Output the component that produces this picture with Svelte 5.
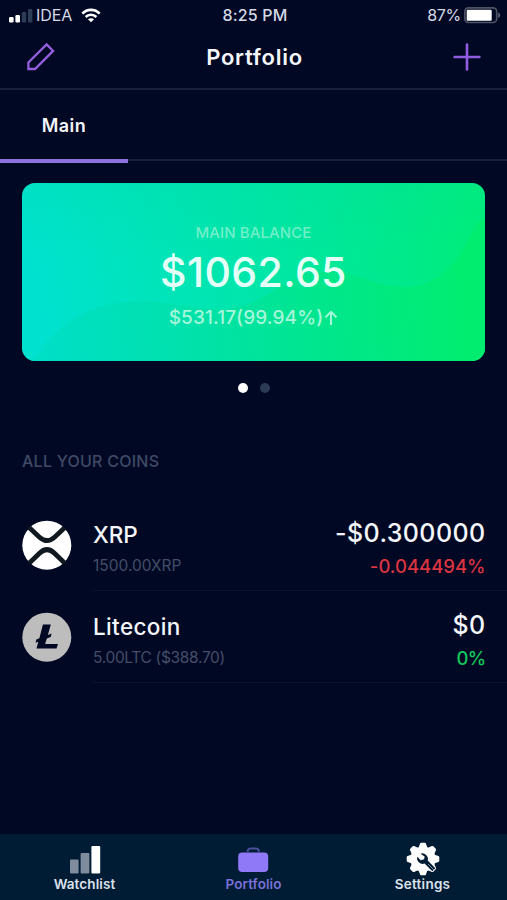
<script>
  const coins = [
    { id: 'xrp', name: 'XRP', held: '1500.00XRP', value: '-$0.300000', change: '-0.044494%', tone: 'down' },
    { id: 'ltc', name: 'Litecoin', held: '5.00LTC ($388.70)', value: '$0', change: '0%', tone: 'flat' }
  ];
</script>

<div class="screen">
  <div class="status">
    <div class="carrier">
      <svg width="24" height="15" viewBox="0 0 24 15">
        <rect x="0" y="9" width="4.6" height="5.5" rx="1.2" fill="#fff" />
        <rect x="6.4" y="7" width="4.6" height="7.5" rx="1.2" fill="#fff" />
        <rect x="12.8" y="4" width="4.4" height="10.5" rx="1.2" fill="#2c3c55" />
        <rect x="19" y="1" width="4.4" height="13.5" rx="1.2" fill="#2c3c55" />
      </svg>
      <span class="network">IDEA</span>
      <svg class="wifi" width="20" height="15" viewBox="0 0 20 15" fill="none" stroke="#fff" stroke-width="2.6">
        <path d="M1.3 5.7C6 .6 14 .6 18.7 5.7" />
        <path d="M4.6 9C7.6 6 12.4 6 15.4 9" />
        <path d="M10 14.3 6.9 11.2C8.6 9.8 11.4 9.8 13.1 11.2Z" fill="#fff" stroke="none" />
      </svg>
    </div>
    <span class="time">8:25 PM</span>
    <div class="power">
      <span>87%</span>
      <svg width="37" height="17" viewBox="0 0 37 17">
        <rect x=".9" y=".9" width="31.8" height="14.6" rx="3.6" fill="#000824" stroke="#4d5365" stroke-width="1.7" />
        <rect x="2.7" y="2.8" width="25" height="11" rx="1.2" fill="#fff" />
        <path d="M34.4 5.5C36.5 6.3 36.5 10.2 34.4 11Z" fill="#6b7185" />
      </svg>
    </div>
  </div>

  <header>
    <svg width="30" height="30" viewBox="0 0 30 30" fill="none" stroke="#945fdd" stroke-width="2.3">
      <path d="M20.6 2.4 27.1 8.9 9 27H2.4V20.4Z" />
    </svg>
    <h1>Portfolio</h1>
    <svg width="28" height="28" viewBox="0 0 28 28" stroke="#8f5ce2" stroke-width="2.6" stroke-linecap="round">
      <path d="M14 1.6V26.4M1.6 14H26.4" />
    </svg>
  </header>

  <nav class="lists"><span class="active">Main</span></nav>

  <section class="card">
    <svg class="waves" width="463" height="178" viewBox="0 0 463 178" preserveAspectRatio="none">
      <defs>
        <linearGradient id="sea" gradientUnits="userSpaceOnUse" x1="20" y1="130" x2="450" y2="30">
          <stop offset="0" stop-color="#00e2cf" />
          <stop offset=".5" stop-color="#00e6a8" />
          <stop offset=".85" stop-color="#00ea88" />
          <stop offset="1" stop-color="#00ee78" />
        </linearGradient>
        <linearGradient id="mid" gradientUnits="userSpaceOnUse" x1="10" y1="130" x2="440" y2="90">
          <stop offset="0" stop-color="#00dfc8" />
          <stop offset=".35" stop-color="#00e1ac" />
          <stop offset=".65" stop-color="#00e68e" />
          <stop offset="1" stop-color="#00ed70" />
        </linearGradient>
        <linearGradient id="top" x1="0" y1="0" x2="0" y2="1">
          <stop offset="0" stop-color="#00d8a8" stop-opacity=".22" />
          <stop offset="1" stop-color="#00d8a8" stop-opacity="0" />
        </linearGradient>
      </defs>
      <rect width="463" height="178" fill="url(#sea)" />
      <rect width="463" height="75" fill="url(#top)" />
      <path d="M8 178C38 140 65 119 119 118C165 120 190 132 222 123C260 108 270 88 307 88C335 88 350 104 385 104C425 102 441 68 451 48C455 40 459 37 463 35V178Z" fill="url(#mid)" />
    </svg>
    <div class="summary">
      <span class="caption">MAIN BALANCE</span>
      <strong>$1062.65</strong>
      <span class="gain">$531.17(99.94%)<svg width="14" height="16" viewBox="0 0 14 16" fill="none" stroke="currentColor" stroke-width="2"><path d="M7 15V2M1.5 7.3 7 1.8 12.5 7.3" /></svg></span>
    </div>
  </section>

  <div class="dots"><i class="on"></i><i></i></div>

  <h2>ALL YOUR COINS</h2>

  <ul>
    {#each coins as coin (coin.id)}
      <li>
        <svg class="logo" width="50" height="50" viewBox="0 0 50 50">
          {#if coin.id === 'xrp'}
            <circle cx="24.8" cy="25.2" r="24.5" fill="#fff" />
            <g fill="none" stroke="#101820" stroke-width="4.8">
              <path d="M7.4 7.8 17.5 17.2Q25 24 32.5 17.2L42.6 7.8" />
              <path d="M7.4 43 17.5 33.3Q25 26 32.5 33.3L42.6 43" />
            </g>
          {:else}
            <circle cx="24.8" cy="25.2" r="24.5" fill="#bdbdbd" />
            <path d="M20.9 12.4H28.8L25.9 23 29.6 21.5 28.7 25 24.8 26.6 23.1 31.9H36L34.5 36.4H14.5L16.3 29.7 13.5 30.8 14.4 27.5 17.4 26.2Z" fill="#000824" />
          {/if}
        </svg>
        <div class="row">
          <div class="asset">
            <span class="name {coin.id}">{coin.name}</span>
            <span class="held {coin.id}">{coin.held}</span>
          </div>
          <div class="worth">
            <span class="value">{coin.value}</span>
            <span class="change {coin.tone}">{coin.change}</span>
          </div>
        </div>
      </li>
    {/each}
  </ul>

  <footer>
    <div class="tab">
      <svg width="34" height="32" viewBox="0 0 34 32">
        <rect x="2" y="17.5" width="8.6" height="14" rx="1" fill="#7f8c9d" />
        <rect x="12.6" y="10.9" width="8.8" height="20.6" rx="1" fill="#7f8c9d" />
        <rect x="23.4" y="4" width="8.8" height="27.5" rx="1" fill="#fff" />
      </svg>
      <span>Watchlist</span>
    </div>
    <div class="tab current">
      <svg width="34" height="32" viewBox="0 0 34 32">
        <path d="M10.7 9.8V8.8Q11.2 6.6 14 6.6H18.6Q21.3 6.6 21.8 8.8V9.8" fill="none" stroke="#4c519d" stroke-width="2" />
        <rect x="1.200" y="10.600" width="30" height="19.400" rx="4" fill="#9079f7" />
      </svg>
      <span>Portfolio</span>
    </div>
    <div class="tab">
      <svg class="gear" width="34" height="34" viewBox="-17 -17 34 34">
        <circle r="12.600" fill="#fff" />
        {#each [0, 45, 90, 135, 180, 225, 270, 315] as angle}
          <path d="M-4.500 -11 -2.900 -15.400Q-2.600 -16.300 -1.700 -16.300H1.700Q2.600 -16.300 2.900 -15.400L4.500 -11Z" fill="#fff" transform="rotate({angle})" />
        {/each}
        <path d="M-2.500 -5.300A5.600 5.600 0 0 1 4.700 1.500L12.300 9.300 9.300 12.300 1.500 4.600A5.600 5.600 0 0 1 -5.700 -2.200L-2.200 1.200 1.100 .3 1.600 -2.500Z" fill="#001c34" />
        <path d="M5 5 11.500 11.500" stroke="#7c899a" stroke-width="1" />
      </svg>
      <span class="settings">Settings</span>
    </div>
  </footer>
</div>

<style>
  :global(body) { margin: 0; background: #000824; }
  .screen {
    display: flex;
    flex-direction: column;
    width: 507px;
    height: 900px;
    overflow: hidden;
    background: #000824;
    color: #f5f6fb;
    font-family: Inter, "Liberation Sans", sans-serif;
    font-feature-settings: "calt" 0;
  }
  svg { display: block; flex: none; }
  span, strong { white-space: nowrap; }

  .status {
    display: grid;
    grid-template-columns: 1fr auto 1fr;
    align-items: center;
    height: 30px;
    padding: 0 6px 0 9px;
    font-size: 16px;
    color: #d5d9e6;
  }
  .carrier { display: flex; align-items: center; }
  .network { margin-left: 3px; letter-spacing: -0.1px; }
  .wifi { margin-left: 9px; }
  .time { font-weight: 500; letter-spacing: 0.2px; }
  .power { display: flex; align-items: center; justify-content: flex-end; gap: 3px; letter-spacing: -0.3px; }

  header {
    display: flex;
    align-items: center;
    justify-content: space-between;
    box-sizing: border-box;
    height: 60px;
    padding: 0 26px 5px;
    border-bottom: 2px solid #172039;
  }
  h1 { margin: 0; font-size: 22px; font-weight: 600; letter-spacing: 0.75px; }

  .lists {
    display: flex;
    height: 71px;
    box-shadow: inset 0 -2px #172039;
  }
  .active {
    box-sizing: border-box;
    width: 128px;
    height: 73px;
    border-bottom: 4px solid #8c72df;
    line-height: 71px;
    text-align: center;
    font-size: 18px;
    font-weight: 600;
    letter-spacing: 0.4px;
  }

  .card {
    display: grid;
    height: 178px;
    margin: 22px 22px 0;
    border-radius: 13px;
    overflow: hidden;
  }
  .waves, .summary { grid-area: 1 / 1; }
  .summary {
    z-index: 1;
    display: flex;
    flex-direction: column;
    align-items: center;
    padding-top: 40px;
  }
  .caption { font-size: 15px; line-height: 20px; font-weight: 500; letter-spacing: 0.1px; color: #72efc9; }
  strong { margin-top: 4px; font-size: 41px; line-height: 50px; font-weight: 500; letter-spacing: 0.4px; color: #e4fff8; }
  .gain { display: flex; align-items: center; gap: 1px; margin-top: 9px; font-size: 19px; line-height: 24px; font-weight: 500; letter-spacing: 0.1px; color: #a5f6da; }

  .dots { display: flex; justify-content: center; gap: 12px; margin-top: 22px; }
  .dots i { width: 10px; height: 10px; border-radius: 50%; background: #2b3b55; }
  .dots .on { background: #fff; }

  h2 {
    margin: 58px 0 0 22px;
    font-size: 16px;
    line-height: 20px;
    font-weight: 500;
    letter-spacing: 0.25px;
    color: #3f4a65;
  }

  ul { margin: 28px 0 0; padding: 0; list-style: none; }
  li { display: flex; align-items: center; height: 92px; padding-left: 22px; }
  .row {
    display: flex;
    flex: 1;
    justify-content: space-between;
    box-sizing: border-box;
    height: 92px;
    margin-left: 21px;
    padding: 19px 21.500px 0 0;
    border-bottom: 1px solid #0b142d;
  }
  .asset, .worth { display: flex; flex-direction: column; }
  .worth { align-items: flex-end; }
  .name { margin-top: 3px; font-size: 22.500px; line-height: 28px; font-weight: 500; }
  .name.ltc { letter-spacing: 0.35px; }
  .held { margin-top: 7px; font-size: 15.500px; line-height: 20px; color: #434e68; }
  .held.ltc { letter-spacing: -0.32px; }
  .value { font-size: 25px; line-height: 30px; font-weight: 500; letter-spacing: 0.4px; }
  .change { margin-top: 7px; font-size: 18.500px; line-height: 22px; font-weight: 500; }
  .down { color: #dc3440; }
  .flat { color: #13c85a; letter-spacing: -0.6px; }

  footer {
    display: flex;
    height: 66px;
    margin-top: auto;
    background: #001c34;
  }
  .tab {
    display: flex;
    flex: 1;
    flex-direction: column;
    align-items: center;
    justify-content: flex-end;
    padding-bottom: 7px;
    font-size: 13.500px;
    line-height: 18px;
    font-weight: 600;
    letter-spacing: 0.1px;
    color: #dce2ec;
  }
  .tab svg { height: 32px; overflow: visible; margin-bottom: 1px; }
  .tab .gear { height: 34px; margin-bottom: -1px; }
  .settings { letter-spacing: 0.25px; }
  .current { color: #7a70d8; }
</style>
